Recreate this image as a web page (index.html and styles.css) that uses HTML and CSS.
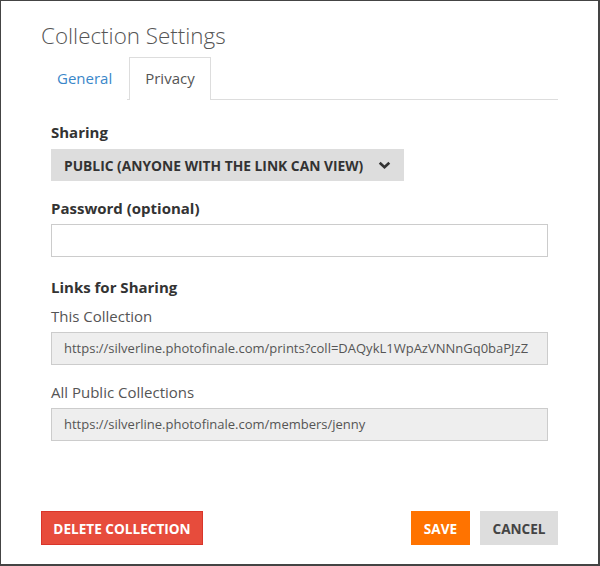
FILE: index.html
```html
<!DOCTYPE html>
<html>
<head>
<meta charset="utf-8">
<link rel="stylesheet" href="styles.css">
</head>
<body>
<div class="dialog">
  <h1 class="title">Collection Settings</h1>
  <ul class="tabs">
    <li class="tab">General</li>
    <li class="tab active">Privacy</li>
  </ul>
  <div class="panel">
    <div class="label bold">Sharing</div>
    <div class="select">
      <span class="sel-text">PUBLIC (ANYONE WITH THE LINK CAN VIEW)</span>
      <svg class="chev" width="13" height="9" viewBox="0 0 13 9"><path d="M1.7 1.7 L6.5 6.3 L11.3 1.7" fill="none" stroke="#333" stroke-width="2.6"/></svg>
    </div>
    <div class="label bold pw">Password (optional)</div>
    <div class="input"></div>
    <div class="label bold links">Links for Sharing</div>
    <div class="label sub">This Collection</div>
    <div class="input ro">https://silverline.photofinale.com/prints?coll=DAQykL1WpAzVNNnGq0baPJzZ</div>
    <div class="label sub second">All Public Collections</div>
    <div class="input ro">https://silverline.photofinale.com/members/jenny</div>
  </div>
  <div class="footer">
    <button class="btn delete">DELETE COLLECTION</button>
    <div class="right">
      <button class="btn save">SAVE</button>
      <button class="btn cancel">CANCEL</button>
    </div>
  </div>
</div>
</body>
</html>
```
FILE: styles.css
```css
html, body {
  margin: 0;
  padding: 0;
  background: #444;
  height: 566px;
  overflow: hidden;
}
.dialog {
  margin: 1px 2px 2px 1px;
  height: 563px;
  box-sizing: border-box;
  background: #fff;
  padding: 0 40px 0 40px;
  font-family: "Open Sans", "Noto Sans", sans-serif;
  color: #333;
  display: flex;
  flex-direction: column;
}
.title {
  margin: 0;
  padding-top: 19px;
  font-size: 22.4px;
  font-weight: 300;
  line-height: 32px;
  color: #555;
  height: 37px;
}
.tabs {
  list-style: none;
  margin: 0;
  padding: 0;
  display: flex;
  border-bottom: 1px solid #ddd;
  width: 517px;
}
.tab {
  padding: 10px 15px 10px 15px;
  border: 1px solid transparent;
  border-bottom: none;
  margin-right: 2px;
  font-size: 15px;
  line-height: 21px;
  color: #3a87c9;
  margin-bottom: -1px;
  background: #fff;
}
.tab:first-child { padding-right: 14px; }
.tab.active {
  border-color: #ddd;
  color: #555;
  padding-bottom: 11px;
}
.panel {
  padding: 0 10px;
  flex: 1;
}
.label {
  font-size: 15px;
  line-height: 20px;
}
.bold { font-weight: 700; }
.panel > .label:first-child { margin-top: 22px; }
.select {
  margin-top: 7px;
  width: 353px;
  height: 32px;
  background: #ddd;
  display: flex;
  align-items: center;
  box-sizing: border-box;
  padding: 0 12px 0 13px;
  font-size: 13.8px;
  font-weight: 700;
  color: #333;
  white-space: nowrap;
}
.sel-text { flex: none; }
.chev { margin-left: 15px; flex: none; }
.pw { margin-top: 17px; }
.input {
  margin-top: 6px;
  height: 33px;
  box-sizing: border-box;
  border: 1px solid #ccc;
  width: 497px;
  background: #fff;
}
.input.ro {
  background: #eee;
  font-size: 13px;
  color: #555;
  line-height: 31px;
  padding-left: 12px;
  white-space: nowrap;
  overflow: hidden;
}
.links { margin-top: 20px; }
.sub { color: #555; margin-top: 9px; }
.second { margin-top: 17px; }
.footer {
  display: flex;
  justify-content: space-between;
  align-items: flex-start;
  height: 53px;
}
.right { display: flex; gap: 10px; }
.btn {
  font-family: "Open Sans", "Noto Sans", sans-serif;
  font-weight: 700;
  font-size: 13.6px;
  height: 34px;
  border: 1px solid transparent;
  padding: 0;
  margin: 0;
  color: #fff;
}
.delete { background: #e74c3c; border-color: #d9352a; width: 162px; }
.save { background: #ff7300; border-color: #ff7300; width: 59px; }
.cancel { background: #ddd; border-color: #ddd; color: #444; width: 78px; }
```
